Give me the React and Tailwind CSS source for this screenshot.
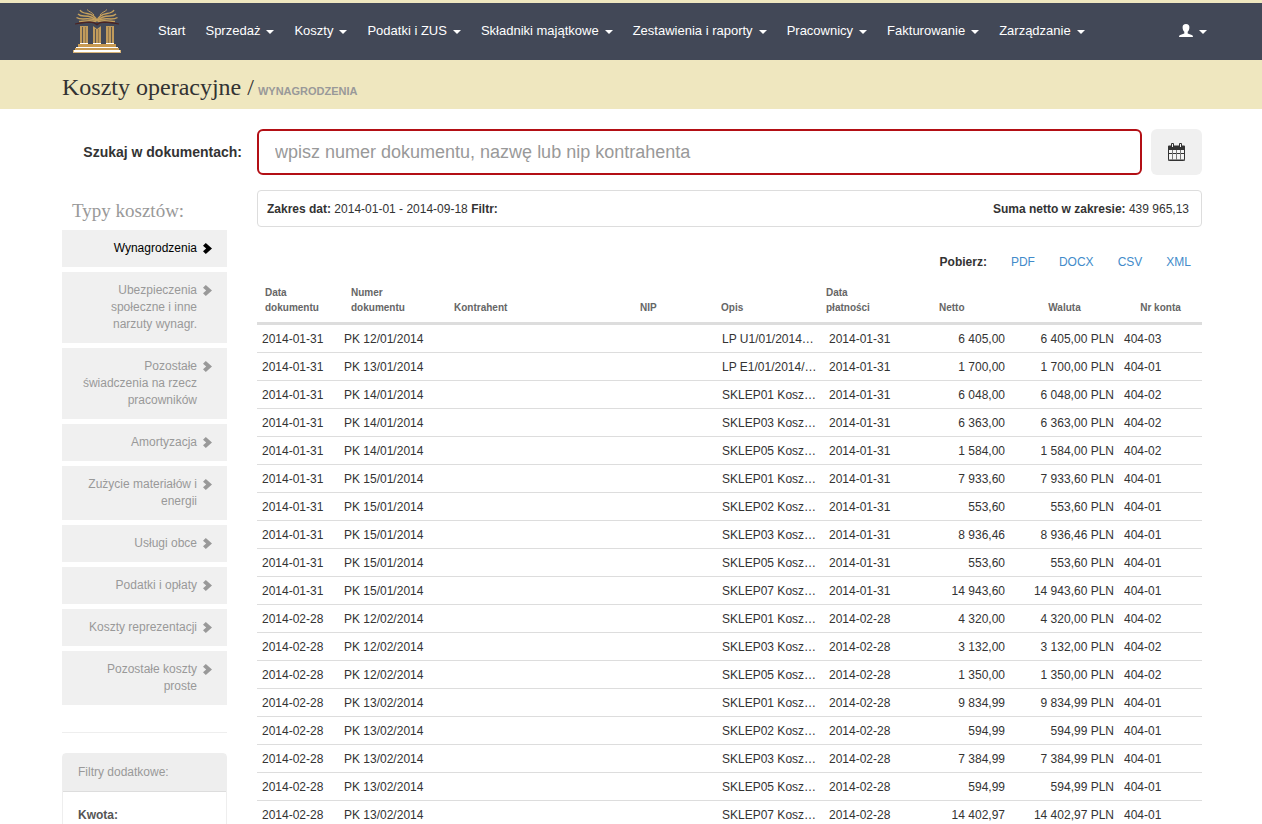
const menu = ['Sprzedaż', 'Koszty', 'Podatki i ZUS', 'Składniki majątkowe', 'Zestawienia i raporty', 'Pracownicy', 'Fakturowanie', 'Zarządzanie'];

const costTypes = [
  'Wynagrodzenia',
  'Ubezpieczenia społeczne i inne narzuty wynagr.',
  'Pozostałe świadczenia na rzecz pracowników',
  'Amortyzacja',
  'Zużycie materiałów i energii',
  'Usługi obce',
  'Podatki i opłaty',
  'Koszty reprezentacji',
  'Pozostałe koszty proste',
];

const columns = [
  { label: 'Data dokumentu', width: 'w-[82px]', head: 'pl-2' },
  { label: 'Numer dokumentu', width: 'w-[107px]', head: 'pl-3 pr-8' },
  { label: 'Kontrahent', width: '', head: 'pl-2' },
  { label: 'NIP', width: 'w-[85px]', head: 'pl-2' },
  { label: 'Opis', width: 'w-[107px]', head: 'pl-1' },
  { label: 'Data płatności', width: 'w-[107px]', head: 'pl-0.5 pr-12' },
  { label: 'Netto', width: 'w-[79px]', head: 'pl-2' },
  { label: 'Waluta', width: 'w-[109px]', head: 'text-center' },
  { label: 'Nr konta', width: 'w-[83px]', head: 'text-center' },
];

const rows = [
  ['2014-01-31', 'PK 12/01/2014', 'LP U1/01/2014…', '6 405,00', '404-03'],
  ['2014-01-31', 'PK 13/01/2014', 'LP E1/01/2014/…', '1 700,00', '404-01'],
  ['2014-01-31', 'PK 14/01/2014', 'SKLEP01 Kosz…', '6 048,00', '404-02'],
  ['2014-01-31', 'PK 14/01/2014', 'SKLEP03 Kosz…', '6 363,00', '404-02'],
  ['2014-01-31', 'PK 14/01/2014', 'SKLEP05 Kosz…', '1 584,00', '404-02'],
  ['2014-01-31', 'PK 15/01/2014', 'SKLEP01 Kosz…', '7 933,60', '404-01'],
  ['2014-01-31', 'PK 15/01/2014', 'SKLEP02 Kosz…', '553,60', '404-01'],
  ['2014-01-31', 'PK 15/01/2014', 'SKLEP03 Kosz…', '8 936,46', '404-01'],
  ['2014-01-31', 'PK 15/01/2014', 'SKLEP05 Kosz…', '553,60', '404-01'],
  ['2014-01-31', 'PK 15/01/2014', 'SKLEP07 Kosz…', '14 943,60', '404-01'],
  ['2014-02-28', 'PK 12/02/2014', 'SKLEP01 Kosz…', '4 320,00', '404-02'],
  ['2014-02-28', 'PK 12/02/2014', 'SKLEP03 Kosz…', '3 132,00', '404-02'],
  ['2014-02-28', 'PK 12/02/2014', 'SKLEP05 Kosz…', '1 350,00', '404-02'],
  ['2014-02-28', 'PK 13/02/2014', 'SKLEP01 Kosz…', '9 834,99', '404-01'],
  ['2014-02-28', 'PK 13/02/2014', 'SKLEP02 Kosz…', '594,99', '404-01'],
  ['2014-02-28', 'PK 13/02/2014', 'SKLEP03 Kosz…', '7 384,99', '404-01'],
  ['2014-02-28', 'PK 13/02/2014', 'SKLEP05 Kosz…', '594,99', '404-01'],
  ['2014-02-28', 'PK 13/02/2014', 'SKLEP07 Kosz…', '14 402,97', '404-01'],
];

function Caret() {
  return (
    <svg className="mt-[2px] ml-[6px] h-1 w-2" viewBox="0 0 8 4" fill="currentColor" aria-hidden="true">
      <path d="M0 0h8L4 4z" />
    </svg>
  );
}

function Chevron() {
  return (
    <svg className="mt-[3px] h-[11px] w-[9px] shrink-0" viewBox="0 0 9 11" fill="currentColor" aria-hidden="true">
      <path d="M0 2.700 2.800 0 9 5.500 2.800 11 0 8.300 3.200 5.500z" />
    </svg>
  );
}

function Logo() {
  return (
    <svg className="h-[44px] w-[48px]" viewBox="0 0 48 44" aria-hidden="true">
      <g fill="none" stroke="#c5a05c" strokeWidth="1.4">
        <path d="M24 12C22 6 18 5 14 4.500 10 4 8 3 7 1" />
        <path d="M24 12C20 7 15 7 11 7 8 7 6 6 5 5" />
        <path d="M24 12C19 9 14 9.500 10 10 7 10 5 9.500 3.500 8.500" />
        <path d="M23 12.500C18 11 12 12 6 12.500" />
        <path d="M21 6C19 3 16 3 14 0.500" strokeWidth="1" />
        <path d="M24 12C26 6 30 5 34 4.500 38 4 40 3 41 1" />
        <path d="M24 12C28 7 33 7 37 7 40 7 42 6 43 5" />
        <path d="M24 12C29 9 34 9.500 38 10 41 10 43 9.500 44.500 8.500" />
        <path d="M25 12.500C30 11 36 12 42 12.500" />
        <path d="M27 6C29 3 32 3 34 0.500" strokeWidth="1" />
      </g>
      <path d="M2 14.500c7-2 15-3 20-1l2 1 2-1c5-2 13-1 20 1v1c-7-1-14-2-19-1l-3 2-3-2c-5-1-12 0-19 1z" fill="#4a2424" />
      <g fill="#c09b5c">
        <path d="M7 17h8v18H7zM20 17l4 3 4-3v18h-8zM33 17h8v18h-8z" />
      </g>
      <path d="M9.500 18v16M22.500 20v14M38.500 18v16" stroke="#5d564f" />
      <path d="M12.500 18v16M25.500 20v14M35.500 18v16" stroke="#94794e" />
      <path d="M7 34.500h8M20 34.500h8M33 34.500h8" stroke="#fff" />
      <path d="M5 35h38v3H5z" fill="#c89a52" />
      <path d="M3 38h42v1H3z" fill="#fff" />
      <path d="M2 39h44v2H2z" fill="#c89a52" />
      <path d="M0 41h48v3H0z" fill="#d9b478" />
      <path d="M1 41h46v2H1z" fill="#fff" />
    </svg>
  );
}

function Navbar() {
  return (
    <header className="border-t-[3px] border-[#efe7bf] bg-[#424857] text-[13px] text-white">
      <div className="mx-auto flex h-[57px] max-w-[1262px] items-center pr-[55px] pb-[2px] pl-[73px]">
        <a href="#start" aria-label="Strona główna">
          <Logo />
        </a>
        <nav className="ml-[27px] flex flex-1 items-center whitespace-nowrap">
          <a href="#start" className="px-[10px] hover:text-[#efe7bf]">Start</a>
          {menu.map((item) => (
            <button key={item} type="button" className="flex items-center px-[10px] hover:text-[#efe7bf]">
              {item}
              <Caret />
            </button>
          ))}
        </nav>
        <button type="button" aria-label="Konto" className="flex items-center">
          <svg className="h-[13px] w-[14px]" viewBox="0 0 14 13" fill="currentColor" aria-hidden="true">
            <path d="M7 0C4.600 0 3.500 1.500 3.600 3.500c0 1.800.7 3.400 1.700 4.300v1.700L1.200 11C.4 11.400.1 12 0 13h14c-.1-1-.4-1.600-1.200-2L8.700 9.500V7.800c1-.9 1.700-2.500 1.700-4.300C10.500 1.500 9.400 0 7 0z" />
          </svg>
          <Caret />
        </button>
      </div>
    </header>
  );
}

function Sidebar() {
  return (
    <aside className="w-[165px] shrink-0 text-[12px] leading-[17px] text-[#999]">
      <h2 className="mt-[11px] mb-[9px] pl-[10px] font-['Liberation_Serif',serif] text-[19px] leading-5">Typy kosztów:</h2>
      <ul className="space-y-[5px]">
        {costTypes.map((type, i) => (
          <li key={type}>
            <a
              href="#koszty"
              className={`flex justify-end gap-[6px] bg-[#f0f0f0] py-[10px] pr-[15px] pl-4 text-right ${i === 0 ? 'text-black' : 'hover:text-black'}`}
            >
              <span>{type}</span>
              <Chevron />
            </a>
          </li>
        ))}
      </ul>
      <hr className="mt-[27px] mb-5 border-[#eee]" />
      <section className="rounded border border-[#eee]">
        <h3 className="border-b border-[#ddd] bg-[#eee] px-[15px] py-[10px]">Filtry dodatkowe:</h3>
        <div className="p-[15px]">
          <label htmlFor="kwota" className="font-bold text-[#555]">Kwota:</label>
          <input id="kwota" type="text" className="mt-1 block h-8 w-full rounded border border-[#ccc] px-2" />
        </div>
      </section>
    </aside>
  );
}

function Documents() {
  return (
    <table className="w-full table-fixed text-left text-[12px] leading-[18px]">
      <colgroup>
        {columns.map((col) => (
          <col key={col.label} className={col.width} />
        ))}
      </colgroup>
      <thead className="border-b-[3px] border-[#ddd] text-[10px] leading-[15px] text-[#666]">
        <tr>
          {columns.map((col) => (
            <th key={col.label} scope="col" className={`pb-[7px] align-bottom ${col.head}`}>{col.label}</th>
          ))}
        </tr>
      </thead>
      <tbody className="whitespace-nowrap">
        {rows.map(([date, number, desc, amount, account], i) => (
          <tr key={i} className="border-b border-[#ddd]">
            <td className="px-[5px] pt-[5px] pb-1">{date}</td>
            <td className="px-[5px] pt-[5px] pb-1">{number}</td>
            <td />
            <td />
            <td className="px-[5px] pt-[5px] pb-1">{desc}</td>
            <td className="px-[5px] pt-[5px] pb-1">{date}</td>
            <td className="px-[5px] pt-[5px] pb-1 text-right">{amount}</td>
            <td className="px-[5px] pt-[5px] pb-1 text-right">{amount} PLN</td>
            <td className="px-[5px] pt-[5px] pb-1">{account}</td>
          </tr>
        ))}
      </tbody>
    </table>
  );
}

export default function App() {
  return (
    <div className="bg-white font-['Liberation_Sans',Arial,sans-serif] text-[13px] text-[#333]">
      <Navbar />
      <div className="bg-[#efe7bf]">
        <h1 className="mx-auto flex h-[49px] max-w-[1262px] items-baseline gap-1 pt-[13px] pr-[60px] pl-[62px] font-['Liberation_Serif',serif] text-[24px] leading-7">
          Koszty operacyjne /
          <small className="font-['Liberation_Sans',Arial,sans-serif] text-[11px] font-bold text-[#999]">WYNAGRODZENIA</small>
        </h1>
      </div>
      <main className="mx-auto max-w-[1262px] pt-5 pr-[60px] pl-[62px]">
        <form className="flex items-center" onSubmit={(e) => e.preventDefault()}>
          <label htmlFor="search" className="w-[195px] shrink-0 pr-[15px] text-right text-[14px] font-bold">
            Szukaj w dokumentach:
          </label>
          <input
            id="search"
            type="text"
            placeholder="wpisz numer dokumentu, nazwę lub nip kontrahenta"
            className="h-[46px] min-w-0 flex-1 rounded-md border-2 border-[#b30f15] px-4 text-[18px] placeholder:text-[#999]"
          />
          <button type="button" aria-label="Zakres dat" className="ml-[9px] flex h-[46px] w-[51px] items-center justify-center rounded-md bg-[#f0f0f0]">
            <svg className="h-[18px] w-[17px]" viewBox="0 0 17 18" aria-hidden="true">
              <rect x="0.5" y="3.500" width="16" height="14" rx="1" fill="#f4f4f4" stroke="#333" />
              <path d="M1 2.500h15a1 1 0 0 1 1 1V7H0V3.500a1 1 0 0 1 1-1z" fill="#333" />
              <path d="M3 3V1a1 1 0 0 1 1-1h1a1 1 0 0 1 1 1v2zM11 3V1a1 1 0 0 1 1-1h1a1 1 0 0 1 1 1v2z" fill="#333" />
              <path d="M4.500 1v3M12.500 1v3" stroke="#f4f4f4" />
              <path d="M0 10.500h17M0 17h17" stroke="#333" />
              <path d="M4.500 7v10M8.500 7v10M12.500 7v10" stroke="#777" />
            </svg>
          </button>
        </form>
        <div className="mt-[15px] flex gap-[30px]">
          <Sidebar />
          <div className="min-w-0 flex-1">
            <div className="flex justify-between rounded border border-[#ddd] pt-[10px] pr-[12px] pb-2 pl-[9px] text-[12px] leading-[17px]">
              <p><b>Zakres dat:</b> 2014-01-01 - 2014-09-18 <b>Filtr:</b></p>
              <p><b>Suma netto w zakresie:</b> 439 965,13</p>
            </div>
            <div className="mt-[26px] mb-[14px] flex justify-end pr-[11px] text-[12px] leading-[18px]">
              <b>Pobierz:</b>
              {['PDF', 'DOCX', 'CSV', 'XML'].map((format) => (
                <a key={format} href="#pobierz" className="ml-6 text-[#428bca] hover:underline">{format}</a>
              ))}
            </div>
            <Documents />
          </div>
        </div>
      </main>
    </div>
  );
}
